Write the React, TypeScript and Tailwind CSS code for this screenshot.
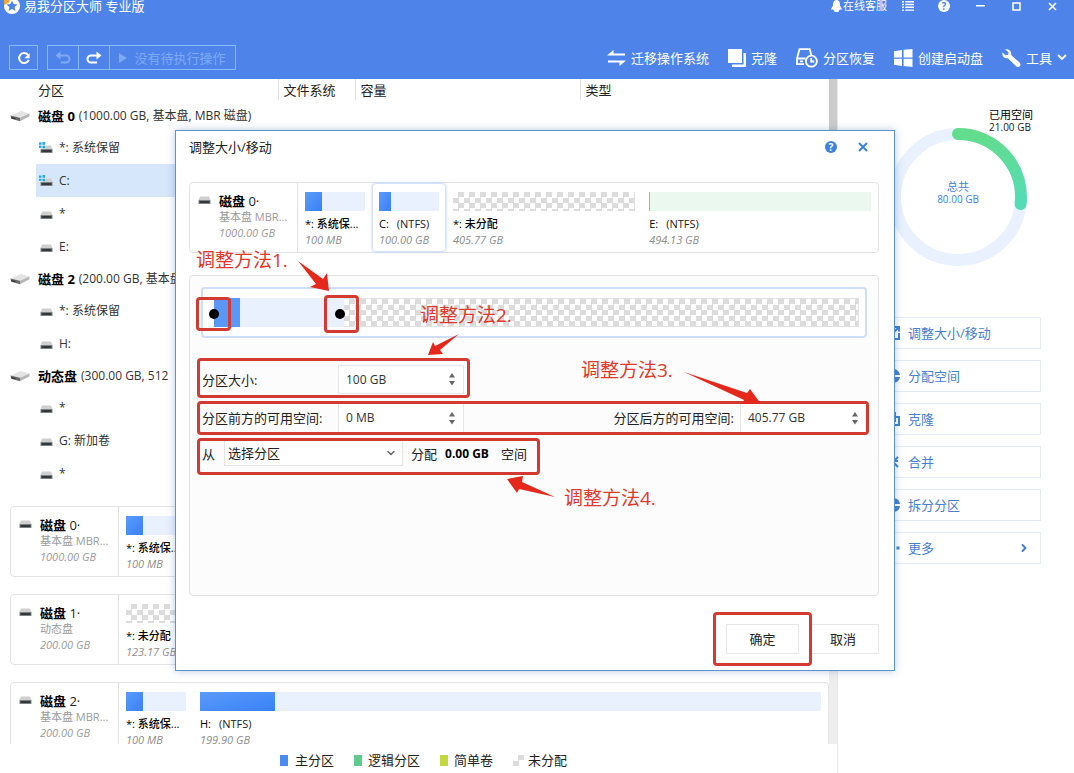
import React, { useState } from 'react'
import { ChevronDown, ChevronRight } from 'lucide-react'

type Segment = {
    name: string
    fs?: string
    size: string
    grow?: number
    kind: 'primary' | 'logical' | 'free'
    used?: string
    selected?: boolean
}

type Disk = {
    name: string
    type: string
    size: string
    segments: Segment[]
}

type TreeRow = {
    label: string
    detail?: string
    disk?: boolean
    system?: boolean
    selected?: boolean
}

const treeRows: TreeRow[] = [
    { label: '磁盘 0', detail: '(1000.00 GB, 基本盘, MBR 磁盘)', disk: true },
    { label: '*: 系统保留', system: true },
    { label: 'C:', system: true, selected: true },
    { label: '*' },
    { label: 'E:' },
    { label: '磁盘 2', detail: '(200.00 GB, 基本盘, MBR 磁盘)', disk: true },
    { label: '*: 系统保留' },
    { label: 'H:' },
    { label: '动态盘', detail: '(300.00 GB, 512', disk: true },
    { label: '*' },
    { label: 'G: 新加卷' },
    { label: '*' },
]

const disk0: Disk = {
    name: '0',
    type: '基本盘 MBR...',
    size: '1000.00 GB',
    segments: [
        { name: '*: 系统保...', size: '100 MB', kind: 'primary', used: '28%' },
        { name: 'C:', fs: '(NTFS)', size: '100.00 GB', kind: 'primary', used: '20%', selected: true },
        { name: '*: 未分配', size: '405.77 GB', kind: 'free', grow: 405.77 },
        { name: 'E:', fs: '(NTFS)', size: '494.13 GB', kind: 'logical', used: '1px', grow: 494.13 },
    ],
}

const disks: Disk[] = [
    { ...disk0, segments: disk0.segments.map((s) => ({ ...s, selected: false })) },
    {
        name: '1',
        type: '动态盘',
        size: '200.00 GB',
        segments: [{ name: '*: 未分配', size: '123.17 GB', kind: 'free', grow: 1 }],
    },
    {
        name: '2',
        type: '基本盘 MBR...',
        size: '200.00 GB',
        segments: [
            { name: '*: 系统保...', size: '100 MB', kind: 'primary', used: '28%' },
            { name: 'H:', fs: '(NTFS)', size: '199.90 GB', kind: 'primary', used: '12%', grow: 1 },
        ],
    },
]

const checker = 'bg-[conic-gradient(#dcdcdc_25%,#ffffff_0_50%,#dcdcdc_0_75%,#ffffff_0)] bg-[length:11px_11px]'

function DriveIcon() {
    return (
        <svg width="20" height="12" viewBox="0 0 20 12" className="shrink-0">
            <path d="M0.5 5.5 11 1l8.5 2.5-9.5 4.2z" fill="#e4e4e4" />
            <path d="M10 7.7l9.5-4.2v2.8L10 11.2z" fill="#b5b5b5" />
            <path d="M0.5 5.5 10 7.7v3.5L1.2 8.8z" fill="#6a6a6a" />
            <path d="M1.5 7l4 1v1.2l-4-1z" fill="#2e2e2e" />
        </svg>
    )
}

function PartIcon({ system }: { system?: boolean }) {
    return (
        <svg width="14" height="12" viewBox="0 0 14 12" className="shrink-0">
            <path d="M3 3.5h9l1.5 3.5H1.5z" fill="#cfcfcf" />
            <rect x="1.5" y="7" width="12" height="4" rx="0.5" fill="#7d8285" />
            <rect x="2.5" y="8" width="10" height="2" fill="#33383b" />
            {system && (
                <g fill="#2aa5e0">
                    <rect x="0" y="0" width="6.4" height="6.4" fill="#ffffff" />
                    <rect x="0" y="0.4" width="2.6" height="2.4" />
                    <rect x="3.4" y="0" width="2.8" height="2.8" />
                    <rect x="0" y="3.6" width="2.6" height="2.3" />
                    <rect x="3.4" y="3.6" width="2.8" height="2.7" />
                </g>
            )}
        </svg>
    )
}

function ToolButton({ label, icon, children }: { label: string, icon: React.ReactNode, children?: React.ReactNode }) {
    return (
        <button className="flex items-center gap-[5px] whitespace-nowrap text-[13px] leading-5">
            {icon}
            {label}
            {children}
        </button>
    )
}

function Header() {
    return (
        <header className="shrink-0 bg-[#4e84ea] text-white">
            <div className="flex h-3 items-center justify-between pl-1 pr-1">
                <div className="flex items-center gap-1">
                    <svg width="16" height="16" viewBox="0 0 16 16">
                        <circle cx="8" cy="8" r="8" fill="#ffffff" />
                        <path d="M0 0h7L4.5 5 0 7z" fill="#f3a73a" />
                        <path d="M8 2.5l1.6 3.6 3.9.4-2.9 2.6.8 3.9L8 11l-3.4 2 .8-3.9L2.5 6.5l3.9-.4z" fill="#4e84ea" />
                    </svg>
                    <span className="text-[13px] leading-3">易我分区大师 专业版</span>
                </div>
                <div className="flex items-center">
                    <button className="flex items-center gap-px pr-[3px] text-[11px] leading-3">
                        <svg width="11" height="12" viewBox="0 0 11 12" fill="#ffffff">
                            <path d="M5.5 0C7.7 0 9 1.8 9 4v1.6l1.6 2.8c.4.8 0 1.6-.8 1.3L9 9.3c-.4.8-.9 1.2-1.4 1.5.6.5.3 1.2-.6 1.2H4c-.9 0-1.2-.7-.6-1.2-.5-.3-1-.7-1.4-1.5l-.8.4c-.8.3-1.2-.5-.8-1.3L2 5.6V4C2 1.8 3.3 0 5.5 0z" />
                        </svg>
                        在线客服
                    </button>
                    <button aria-label="菜单" className="flex w-9 justify-center">
                        <svg width="12" height="10" viewBox="0 0 12 10" fill="#ffffff">
                            <path d="M0 0h2v1.4H0zM3.2 0H12v1.4H3.2zM0 2.8h2v1.4H0zM3.2 2.8H12v1.4H3.2zM0 5.6h2V7H0zM3.2 5.6H12V7H3.2zM0 8.4h2v1.4H0zM3.2 8.4H12v1.4H3.2z" />
                        </svg>
                    </button>
                    <button className="flex w-9 justify-center">
                        <span className="h-3 w-3 rounded-full bg-white text-center text-[10px] font-bold leading-3 text-[#4e84ea]">?</span>
                    </button>
                    <button aria-label="最小化" className="flex w-9 justify-center">
                        <svg width="9" height="10"><path d="M0 4h9v1.500H0z" fill="#ffffff" /></svg>
                    </button>
                    <button aria-label="最大化" className="flex w-9 justify-center">
                        <svg width="9" height="9"><path d="M1 1h7v7H1z" fill="none" stroke="#ffffff" strokeWidth="1.6" /></svg>
                    </button>
                    <button aria-label="关闭" className="flex w-9 justify-center">
                        <svg width="9" height="9"><path d="M1 1l7 7M8 1l-7 7" stroke="#ffffff" strokeWidth="1.6" /></svg>
                    </button>
                </div>
            </div>
            <div className="mt-[33px] flex items-center justify-between pb-[9px] pl-[9px] pr-[7px]">
                <div className="flex h-[25px] gap-[9px]">
                    <button aria-label="刷新" className="flex w-[29px] items-center justify-center border border-[#86bbfa]">
                        <svg width="14" height="14" viewBox="0 0 14 14" fill="none" stroke="#ffffff" strokeWidth="2">
                            <path d="M11.8 8.8A5 5 0 1 1 11 3.9" />
                            <path d="M12.6 2.2v5H7.4z" fill="#ffffff" stroke="none" />
                        </svg>
                    </button>
                    <div className="flex divide-x divide-[#86bbfa] border border-[#86bbfa]">
                        <button aria-label="撤销" className="flex w-[31px] items-center justify-center">
                            <svg width="16" height="14" viewBox="0 0 16 14" fill="none" stroke="#7eaaf5" strokeWidth="2">
                                <path d="M4 4.5h7a3.4 3.4 0 0 1 0 7H6" />
                                <path d="M5.5 0.5v8L0.5 4.5z" fill="#7eaaf5" stroke="none" />
                            </svg>
                        </button>
                        <button aria-label="重做" className="flex w-[31px] items-center justify-center">
                            <svg width="16" height="14" viewBox="0 0 16 14" fill="none" stroke="#ffffff" strokeWidth="2">
                                <path d="M12 4.5H5a3.4 3.4 0 0 0 0 7h6" />
                                <path d="M10.5 0.5v8l5-4z" fill="#ffffff" stroke="none" />
                            </svg>
                        </button>
                        <button className="flex w-[125px] items-center justify-center gap-[7px] text-[13px] leading-5 text-[#7eaaf5]">
                            <svg width="8" height="10"><path d="M0 0l8 5-8 5z" fill="#7eaaf5" /></svg>
                            没有待执行操作
                        </button>
                    </div>
                </div>
                <nav className="flex items-center gap-[19px]">
                    <ToolButton
                        label="迁移操作系统"
                        icon={
                            <svg width="19" height="16" viewBox="0 0 19 16" fill="#ffffff">
                                <path d="M0 5.4 6.5 0v3.6H18v1.8zM19 10.6 12.5 16v-3.6H1v-1.8z" />
                            </svg>
                        }
                    />
                    <ToolButton
                        label="克隆"
                        icon={
                            <svg width="18" height="18" viewBox="0 0 18 18" fill="#ffffff">
                                <path d="M0 0h14v14H0z" />
                                <path d="M15.5 4H18v14H4v-2.5h11.5z" />
                            </svg>
                        }
                    />
                    <ToolButton
                        label="分区恢复"
                        icon={
                            <svg width="22" height="20" viewBox="0 0 22 20" fill="none" stroke="#ffffff" strokeWidth="1.8">
                                <path d="M1 10.5 3.5 1.2h10.2l1.8 6.5M1 10.5v5.6h7M1 10.5h8.5M4 13.3h3" />
                                <circle cx="15.4" cy="13.2" r="5.5" />
                                <path d="M15.2 10v3.5h3" />
                            </svg>
                        }
                    />
                    <ToolButton
                        label="创建启动盘"
                        icon={
                            <svg width="19" height="18" viewBox="0 0 19 18" fill="#ffffff">
                                <path d="M0 2.2 8 1v7.400H0zM9.600.8 18.500 0v8.400H9.600zM0 9.800h8v7.200l-8-1.200zM9.600 9.800h8.900V18l-8.900-1.100z" />
                            </svg>
                        }
                    />
                    <ToolButton
                        label="工具"
                        icon={
                            <svg width="19" height="18" viewBox="0 0 19 18" fill="#ffffff">
                                <path d="M3.2.4 6.600 3.300 6.200 5.800 3.700 6.200.5 3.500C-.3 6.500 2 9.800 5.900 9.200l8.200 8c1.200 1.100 2.700 1 3.700 0s1-2.500-.2-3.600L9.200 6C9.900 2.300 6.500-.4 3.200.4z" />
                            </svg>
                        }
                    >
                        <svg width="10" height="7" viewBox="0 0 10 7" fill="none" stroke="#ffffff" strokeWidth="1.8">
                            <path d="M1 1l4 4 4-4" />
                        </svg>
                    </ToolButton>
                </nav>
            </div>
        </header>
    )
}

function PartitionTree() {
    return (
        <table className="w-full table-fixed border-collapse text-left text-[12px] leading-5 text-[#333]">
            <thead>
                <tr className="h-[21px] text-[13px] text-[#222]">
                    <th className="w-[278px] p-0 pl-[38px] font-normal">分区</th>
                    <th className="w-[77px] border-l border-[#e0e0e0] p-0 pl-[5px] font-normal">文件系统</th>
                    <th className="w-[225px] border-l border-[#e0e0e0] p-0 pl-[5px] font-normal">容量</th>
                    <th className="border-l border-[#e0e0e0] p-0 pl-[5px] font-normal">类型</th>
                </tr>
            </thead>
            <tbody>
                {treeRows.map((row, index) => row.disk ? (
                    <tr key={index} className="h-[31px]">
                        <td colSpan={4} className="p-0 pl-[10px]">
                            <div className="flex items-center">
                                <DriveIcon />
                                <b className="ml-2 text-[13px] text-black">{row.label}</b>
                                <span className="ml-1 whitespace-nowrap">{row.detail}</span>
                            </div>
                        </td>
                    </tr>
                ) : (
                    <tr key={index} className="h-[33px]">
                        <td colSpan={4} className="p-0 pl-9">
                            <div className={row.selected ? 'flex h-[33px] items-center gap-[6px] bg-[#d6e6fb] pl-[3px] pt-px' : 'flex h-[33px] items-center gap-[6px] pl-[3px] pt-px'}>
                                <PartIcon system={row.system} />
                                <span>{row.label}</span>
                            </div>
                        </td>
                    </tr>
                ))}
            </tbody>
        </table>
    )
}

function SegmentBar({ segment }: { segment: Segment }) {
    if (segment.kind === 'free') {
        return <div className={`h-[19px] ${checker}`} />
    }
    if (segment.kind === 'logical') {
        return (
            <div className="h-[19px] bg-[#eaf8ef]">
                <div className="h-full bg-[#6fd29a]" style={{ width: segment.used }} />
            </div>
        )
    }
    return (
        <div className="h-[19px] bg-[#e8f1fd]">
            <div className="h-full bg-linear-to-br from-[#5b9bfa] to-[#3880f5]" style={{ width: segment.used }} />
        </div>
    )
}

function DiskCard({ disk }: { disk: Disk }) {
    return (
        <div className="flex h-[71px] shrink-0 rounded border border-[#e2e4e8] bg-white">
            <div className="flex w-[108px] shrink-0 gap-[8px] border-r border-[#dfe1e5] pl-[7px] pt-[10px]">
                <PartIcon />
                <div className="min-w-0 whitespace-nowrap text-[11px] leading-4 text-[#9a9a9a]">
                    <div className="text-[13px] text-[#222]"><b className="text-black">磁盘</b> {disk.name}·</div>
                    <div>{disk.type}</div>
                    <div className="italic">{disk.size}</div>
                </div>
            </div>
            {disk.segments.map((segment, index) => (
                <div
                    key={index}
                    className={`min-w-0 border px-[6px] pt-[8px] ${segment.grow ? 'basis-0' : 'w-[74px] shrink-0'} ${segment.selected ? 'rounded-sm border-[#d3e1f9] shadow-[0_0_3px_#bcd2f7]' : 'border-transparent'}`}
                    style={{ flexGrow: segment.grow }}
                >
                    <SegmentBar segment={segment} />
                    <div className="mt-[5px] whitespace-nowrap text-[11px] leading-4 text-[#222]">
                        <span className="font-medium text-black">{segment.name}</span>
                        {segment.fs && <span className="ml-2">{segment.fs}</span>}
                    </div>
                    <div className="whitespace-nowrap text-[11px] italic leading-4 text-[#8d8d8d]">{segment.size}</div>
                </div>
            ))}
        </div>
    )
}

function Legend() {
    return (
        <div className="flex h-[29px] shrink-0 items-center gap-[20px] pb-px pl-70 pt-1 text-[13px] leading-5 text-[#222]">
            <span className="flex items-center gap-[7px]"><i className="h-[11px] w-2 bg-[#4a8bf0]" />主分区</span>
            <span className="flex items-center gap-[6px]"><i className="h-[11px] w-2 bg-[#5fcb8c]" />逻辑分区</span>
            <span className="flex items-center gap-[6px]"><i className="h-[11px] w-2 bg-[#c3d83c]" />简单卷</span>
            <span className="flex items-center gap-[4px]"><i className={`h-[11px] w-[11px] ${checker}`} />未分配</span>
        </div>
    )
}

function SideButton({ label, icon, more }: { label: string, icon: React.ReactNode, more?: boolean }) {
    return (
        <button className="flex h-8 items-center gap-2 border border-[#e3ebf5] pl-[10px] pr-[10px] text-[13px] leading-5 text-[#4680cf]">
            {icon}
            <span className="grow text-left">{label}</span>
            {more && <ChevronRight size={12} strokeWidth={4} />}
        </button>
    )
}

function Sidebar() {
    return (
        <aside className="flex w-[237px] shrink-0 flex-col border-l border-[#e8e8e8] pl-[37px] pr-[33px] pt-[49px]">
            <div className="relative h-[138px] w-[138px] self-center">
                <svg width="138" height="138" viewBox="0 0 138 138" fill="none" strokeWidth="12">
                    <defs>
                        <linearGradient id="used" x1="0" y1="0" x2="0" y2="1">
                            <stop offset="0" stopColor="#62dd8c" />
                            <stop offset="1" stopColor="#54dcb8" />
                        </linearGradient>
                    </defs>
                    <circle cx="69" cy="69" r="63" stroke="#e8f1fd" />
                    <path d="M69 6a63 63 0 0 1 62.600 70" stroke="url(#used)" strokeLinecap="round" />
                </svg>
                <div className="absolute inset-0 flex flex-col items-center justify-center pb-2 text-[10px] leading-[13px] text-[#3f7fdc]">
                    <span className="text-[11px]">总共</span>
                    <span>80.00 GB</span>
                </div>
                <div className="absolute -top-5 left-[100px] whitespace-nowrap text-[10px] leading-[13px] text-[#222]">
                    <div className="text-[11px] text-black">已用空间</div>
                    <div>21.00 GB</div>
                </div>
            </div>
            <div className="mt-[51px] flex flex-col gap-[11px]">
                <SideButton
                    label="调整大小/移动"
                    icon={<svg width="14" height="14" fill="none" stroke="#4680cf" strokeWidth="2"><path d="M7 2H1v11h12V7M7 7l5-5M8.500 1H13v4.500" /></svg>}
                />
                <SideButton
                    label="分配空间"
                    icon={<svg width="14" height="14" fill="#4680cf"><path d="M8 0a6.500 6.500 0 0 1 6 6H8zM6 1v6l2 1h6A6.500 6.500 0 1 1 6 1z" /></svg>}
                />
                <SideButton
                    label="克隆"
                    icon={<svg width="14" height="14" fill="none" stroke="#4680cf" strokeWidth="2"><path d="M1 1h8v8H1zM9 5h4v8H5V9" /></svg>}
                />
                <SideButton
                    label="合并"
                    icon={<svg width="14" height="14" fill="none" stroke="#4680cf" strokeWidth="2"><path d="M12 2L8 6M8 2v4h4M2 12l4-4M6 12V8H2M12 12L8 8" /></svg>}
                />
                <SideButton
                    label="拆分分区"
                    icon={<svg width="14" height="14" fill="#4680cf"><path d="M6 0v14A7 7 0 0 1 6 0zM8 0a7 7 0 0 1 6 6H8zM8 8h6a7 7 0 0 1-6 6z" /></svg>}
                />
                <SideButton
                    label="更多"
                    more
                    icon={<svg width="14" height="14" fill="#4680cf"><path d="M0 5.500h3v3H0zM5 5.500h3v3H5zM10.500 5.500h3v3h-3z" /></svg>}
                />
            </div>
        </aside>
    )
}

function SpinInput({ id, value, className }: { id: string, value: string, className: string }) {
    const [text, setText] = useState(value)
    return (
        <div className={`flex shrink-0 items-center border border-[#e3e5e8] bg-white pl-[7px] pr-[8px] ${className}`}>
            <input
                id={id}
                value={text}
                onChange={(e) => setText(e.target.value)}
                className="w-0 min-w-0 grow bg-transparent text-[12px] leading-4 text-[#333] outline-none"
            />
            <div className="flex flex-col gap-[3px]">
                <button aria-label="增加"><svg className="block" width="6" height="5"><path d="M3 0l3 4.500H0z" fill="#666666" /></svg></button>
                <button aria-label="减少"><svg className="block" width="6" height="5"><path d="M3 4.500L6 0H0z" fill="#666666" /></svg></button>
            </div>
        </div>
    )
}

function Annotations() {
    return (
        <div className="pointer-events-none absolute inset-0 z-20 text-[19px] leading-6 text-[#e0392c]">
            <span className="absolute left-[20px] top-[117px]">调整方法1.</span>
            <span className="absolute left-[244px] top-[172px]">调整方法2.</span>
            <span className="absolute left-[405px] top-[227px]">调整方法3.</span>
            <span className="absolute left-[388px] top-[355px]">调整方法4.</span>
            <svg className="absolute inset-0 h-full w-full" fill="#e5281c">
                <path d="M122 130L147 148 151 142 153 160 134 156 140 153z" />
                <path d="M283 203L264 219 267 223 252 224 257 211 259 215z" />
                <path d="M508 241L571 262 574 258 585 273 566 273 568 269z" />
                <path d="M379 366L346 351 347 345 331 348 341 362 343 358z" />
            </svg>
        </div>
    )
}

function ResizeDialog() {
    return (
        <div
            role="dialog"
            aria-labelledby="dialog-title"
            className="absolute left-[175px] right-[179px] top-[130px] z-10 border border-[#5d92ca] bg-white pb-1 pl-[13px] pr-[15px] shadow-[0_0_8px_rgba(60,100,170,0.35)]"
        >
            <div className="flex h-8 items-center">
                <h2 id="dialog-title" className="grow text-[13px] leading-5 text-[#222]">调整大小/移动</h2>
                <button className="mr-[21px] h-3 w-3 rounded-full bg-[#3f82dd] text-center text-[10px] font-bold leading-3 text-white">?</button>
                <button aria-label="关闭" className="mr-[11px]">
                    <svg className="block" width="10" height="10"><path d="M1 1l8 8M9 1L1 9" stroke="#3f82dd" strokeWidth="2" /></svg>
                </button>
            </div>
            <div className="mt-[19px]">
                <DiskCard disk={disk0} />
            </div>

            <div className="mt-[22px] h-[321px] rounded border border-[#e0e2e6] bg-[#fcfcfd] pl-[7px] pr-[9px] pt-[11px]">
                <div className="relative ml-[4px] mr-[2px] h-[51px] rounded-sm border-2 border-[#cfdef8] bg-white py-[9px] pl-[11px] pr-[6px]">
                    <div className="flex h-[29px]">
                        <div className="w-[26px] shrink-0 bg-[#5a98f8]" />
                        <div className="w-[104px] shrink-0 bg-[#e8f1fd]" />
                        <div className={`grow border border-l-0 border-[#e2e2e2] ${checker}`} />
                    </div>
                    <button aria-label="起点" className="absolute -left-[7px] top-[8px] flex h-[34px] w-[35px] items-center justify-center rounded-sm border-[3px] border-[#d33a32]">
                        <i className="h-[10px] w-[10px] rounded-full bg-black" />
                    </button>
                    <button aria-label="终点" className="absolute left-[121px] top-[6px] flex h-[38px] w-[35px] items-center justify-center rounded-sm border-[3px] border-[#d33a32] pr-1">
                        <i className="h-[10px] w-[10px] rounded-full bg-black" />
                    </button>
                </div>

                <div className="mt-5 flex flex-col items-start gap-[3px] text-[13px] leading-5 text-[#222]">
                    <div className="flex h-10 items-center rounded-sm border-[3px] border-[#d33a32] pl-[2px] pr-[3px] pt-[3px]">
                        <label htmlFor="size" className="w-[136px]">分区大小:</label>
                        <SpinInput id="size" value="100 GB" className="h-[29px] w-[126px]" />
                    </div>
                    <div className="flex h-[34px] items-center self-stretch rounded-sm border-[3px] border-[#d33a32] pl-[2px]">
                        <label htmlFor="before" className="w-[136px] shrink-0">分区前方的可用空间:</label>
                        <SpinInput id="before" value="0 MB" className="h-[28px] w-[126px] border-y-0" />
                        <label htmlFor="after" className="ml-auto mr-[6px]">分区后方的可用空间:</label>
                        <SpinInput id="after" value="405.77 GB" className="h-[28px] w-[126px] border-y-0 border-r-0" />
                    </div>
                    <div className="flex h-[37px] items-center rounded-sm border-[3px] border-[#d33a32] pb-[6px] pl-[2px] pr-[10px]">
                        <label htmlFor="source" className="w-[22px]">从</label>
                        <div className="relative">
                            <select id="source" className="block h-[25px] w-[179px] appearance-none border border-t-0 border-[#e3e5e8] bg-white pl-[3px] text-[13px] leading-5 text-[#222]">
                                <option>选择分区</option>
                            </select>
                            <ChevronDown size={12} strokeWidth={3} className="pointer-events-none absolute right-[6px] top-[6px] text-[#666]" />
                        </div>
                        <span className="ml-2">分配</span>
                        <b className="ml-2 text-[12px] text-black">0.00 GB</b>
                        <span className="ml-3">空间</span>
                    </div>
                </div>
            </div>

            <div className="mt-[16px] flex items-center justify-end text-[13px] leading-5 text-[#222]">
                <div className="rounded-sm border-[3px] border-[#d33a32] px-[10px] py-[9px]">
                    <button className="block h-[30px] w-[73px] border border-[#e6e8ea] bg-white">确定</button>
                </div>
                <button className="h-[30px] w-[67px] border border-l-0 border-[#e6e8ea] bg-white pr-1">取消</button>
            </div>
            <Annotations />
        </div>
    )
}

export default function App() {
    return (
        <div className="relative flex h-screen flex-col overflow-hidden bg-white font-['Open_Sans','Noto_Sans_CJK_SC',sans-serif]">
            <Header />
            <div className="flex min-h-0 grow">
                <main className="flex min-w-0 grow flex-col">
                    <div className="flex shrink-0">
                        <div className="min-w-0 grow pb-[16px]">
                            <PartitionTree />
                        </div>
                        <div className="w-2 shrink-0 bg-[#cbcbcb]" />
                    </div>
                    <div className="flex min-h-0 grow overflow-hidden">
                        <div className="flex min-w-0 grow flex-col gap-[17px] pl-[10px]">
                            {disks.map((disk) => (
                                <DiskCard key={disk.name} disk={disk} />
                            ))}
                        </div>
                        <div className="w-2 shrink-0 bg-[#eeeeee]" />
                    </div>
                    <Legend />
                </main>
                <Sidebar />
            </div>
            <ResizeDialog />
        </div>
    )
}
